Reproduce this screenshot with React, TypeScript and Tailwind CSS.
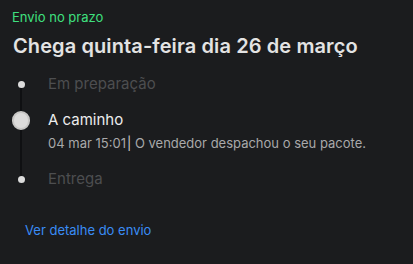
export default function App() {
  return (
    <div className="w-[413px] h-[264px] bg-[#1b1c1e] overflow-hidden" style={{ fontFamily: 'Inter, "Liberation Sans", sans-serif' }}>
      <div className="pt-[9px] pl-[12px]">
        <div className="text-[13px] leading-[17px] text-[#3fe07f]">Envio no prazo</div>
        <div className="mt-[8px] pl-[1px] text-[20px] leading-[24px] font-semibold tracking-[0.1px] text-[#e3e3e3]">Chega quinta-feira dia 26 de março</div>
      </div>
      <div className="relative mt-[14px] pl-[12px]">
        <div className="absolute left-[20px] top-[12px] h-[95px] w-[2px] bg-[#0f1012]" />
        <div className="flex items-center h-[24px]">
          <div className="w-[18px] flex justify-center relative z-10"><div className="w-[7px] h-[7px] rounded-full bg-[#dcdcdc]" /></div>
          <div className="ml-[18px] text-[15px] text-[#4d4e50]">Em preparação</div>
        </div>
        <div className="flex items-center h-[24px] mt-[12px]">
          <div className="w-[18px] flex justify-center relative z-10"><div className="w-[19px] h-[19px] rounded-full bg-[#dddcdb] border-[2px] border-[#c8c7c5]" /></div>
          <div className="ml-[18px] text-[15px] text-[#ececec]">A caminho</div>
        </div>
        <div className="ml-[36px] mt-[3px] text-[13px] leading-[16px] text-[#a9a9aa]">04 mar 15:01<span className="text-[#d0d0d0] ml-[1px]">|</span> O vendedor despachou o seu pacote.</div>
        <div className="flex items-center h-[24px] mt-[16px]">
          <div className="w-[18px] flex justify-center relative z-10"><div className="w-[7px] h-[7px] rounded-full bg-[#dcdcdc]" /></div>
          <div className="ml-[18px] text-[15px] text-[#4d4e50]">Entrega</div>
        </div>
      </div>
      <div className="pl-[25px] mt-[30px] text-[13px] text-[#3a8cf5]">Ver detalhe do envio</div>
    </div>
  );
}
